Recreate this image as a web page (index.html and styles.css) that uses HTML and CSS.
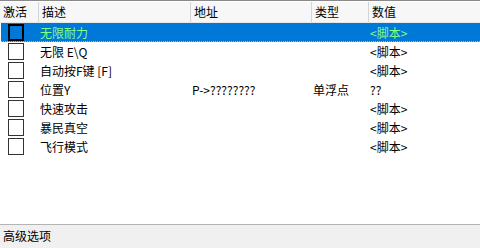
FILE: index.html
```html
<!DOCTYPE html>
<html>
<head>
<meta charset="utf-8">
<link rel="stylesheet" href="styles.css">
</head>
<body>
<div class="window">
  <div class="list">
    <div class="header">
      <div class="c c1">激活</div>
      <div class="c c2">描述</div>
      <div class="c c3">地址</div>
      <div class="c c4">类型</div>
      <div class="c c5">数值</div>
    </div>
    <div class="row sel">
      <div class="c c1"><span class="box"></span></div>
      <div class="c c2">无限耐力</div>
      <div class="c c3"></div>
      <div class="c c4"></div>
      <div class="c c5">&lt;脚本&gt;</div>
    </div>
    <div class="row">
      <div class="c c1"><span class="box"></span></div>
      <div class="c c2">无限 E\Q</div>
      <div class="c c3"></div>
      <div class="c c4"></div>
      <div class="c c5">&lt;脚本&gt;</div>
    </div>
    <div class="row">
      <div class="c c1"><span class="box"></span></div>
      <div class="c c2">自动按F键 [F]</div>
      <div class="c c3"></div>
      <div class="c c4"></div>
      <div class="c c5">&lt;脚本&gt;</div>
    </div>
    <div class="row">
      <div class="c c1"><span class="box"></span></div>
      <div class="c c2">位置Y</div>
      <div class="c c3">P-&gt;????????</div>
      <div class="c c4">单浮点</div>
      <div class="c c5">??</div>
    </div>
    <div class="row">
      <div class="c c1"><span class="box"></span></div>
      <div class="c c2">快速攻击</div>
      <div class="c c3"></div>
      <div class="c c4"></div>
      <div class="c c5">&lt;脚本&gt;</div>
    </div>
    <div class="row">
      <div class="c c1"><span class="box"></span></div>
      <div class="c c2">暴民真空</div>
      <div class="c c3"></div>
      <div class="c c4"></div>
      <div class="c c5">&lt;脚本&gt;</div>
    </div>
    <div class="row">
      <div class="c c1"><span class="box"></span></div>
      <div class="c c2">飞行模式</div>
      <div class="c c3"></div>
      <div class="c c4"></div>
      <div class="c c5">&lt;脚本&gt;</div>
    </div>
  </div>
  <div class="status">高级选项</div>
</div>
</body>
</html>
```
FILE: styles.css
```css
html, body {
  margin: 0;
  padding: 0;
  background: #f0f0f0;
}
body {
  font-family: "Noto Sans CJK SC", "Noto Sans", sans-serif;
  font-size: 12px;
  color: #000;
}
.window {
  width: 480px;
  height: 248px;
  display: flex;
  flex-direction: column;
}
.list {
  height: 225px;
  background: #fff;
  border-top: 1px solid #8a8a8a;
  border-bottom: 1px solid #b4b4b4;
  box-sizing: border-box;
  overflow: hidden;
}
.header {
  display: flex;
  height: 21px;
  background: #f7f7f7;
  border-bottom: 1px solid #e8e8e8;
  box-sizing: border-box;
  margin-top: 1px;
}
.header .c {
  border-right: 1px solid #d4d4d4;
  padding-left: 3px;
  line-height: 20px;
}
.header .c5 {
  border-right: none;
}
.c {
  box-sizing: border-box;
  white-space: nowrap;
  overflow: hidden;
}
.c1 { width: 39px; }
.c2 { width: 152px; }
.c3 { width: 121px; }
.c4 { width: 57px; }
.c5 { flex: 1; }
.row {
  display: flex;
  height: 19px;
  line-height: 19px;
  margin-left: 1px;
  box-sizing: border-box;
}
.row .c { padding-left: 1px; }
.row .c1 { width: 38px; display: flex; align-items: center; padding-left: 7px; }
.box {
  display: block;
  width: 16px;
  height: 17px;
  box-sizing: border-box;
  border: 1px solid #333;
  background: #fff;
}
.row.sel {
  background: #0078d7;
  color: #80ff80;
  border-bottom: 1px dotted #c8a0ff;
}
.row.sel .box {
  background: #0078d7;
  border-color: #000;
  border-width: 2px;
}
.status {
  flex: 1;
  padding-left: 3px;
  line-height: 22px;
  background: #f0f0f0;
}
```
